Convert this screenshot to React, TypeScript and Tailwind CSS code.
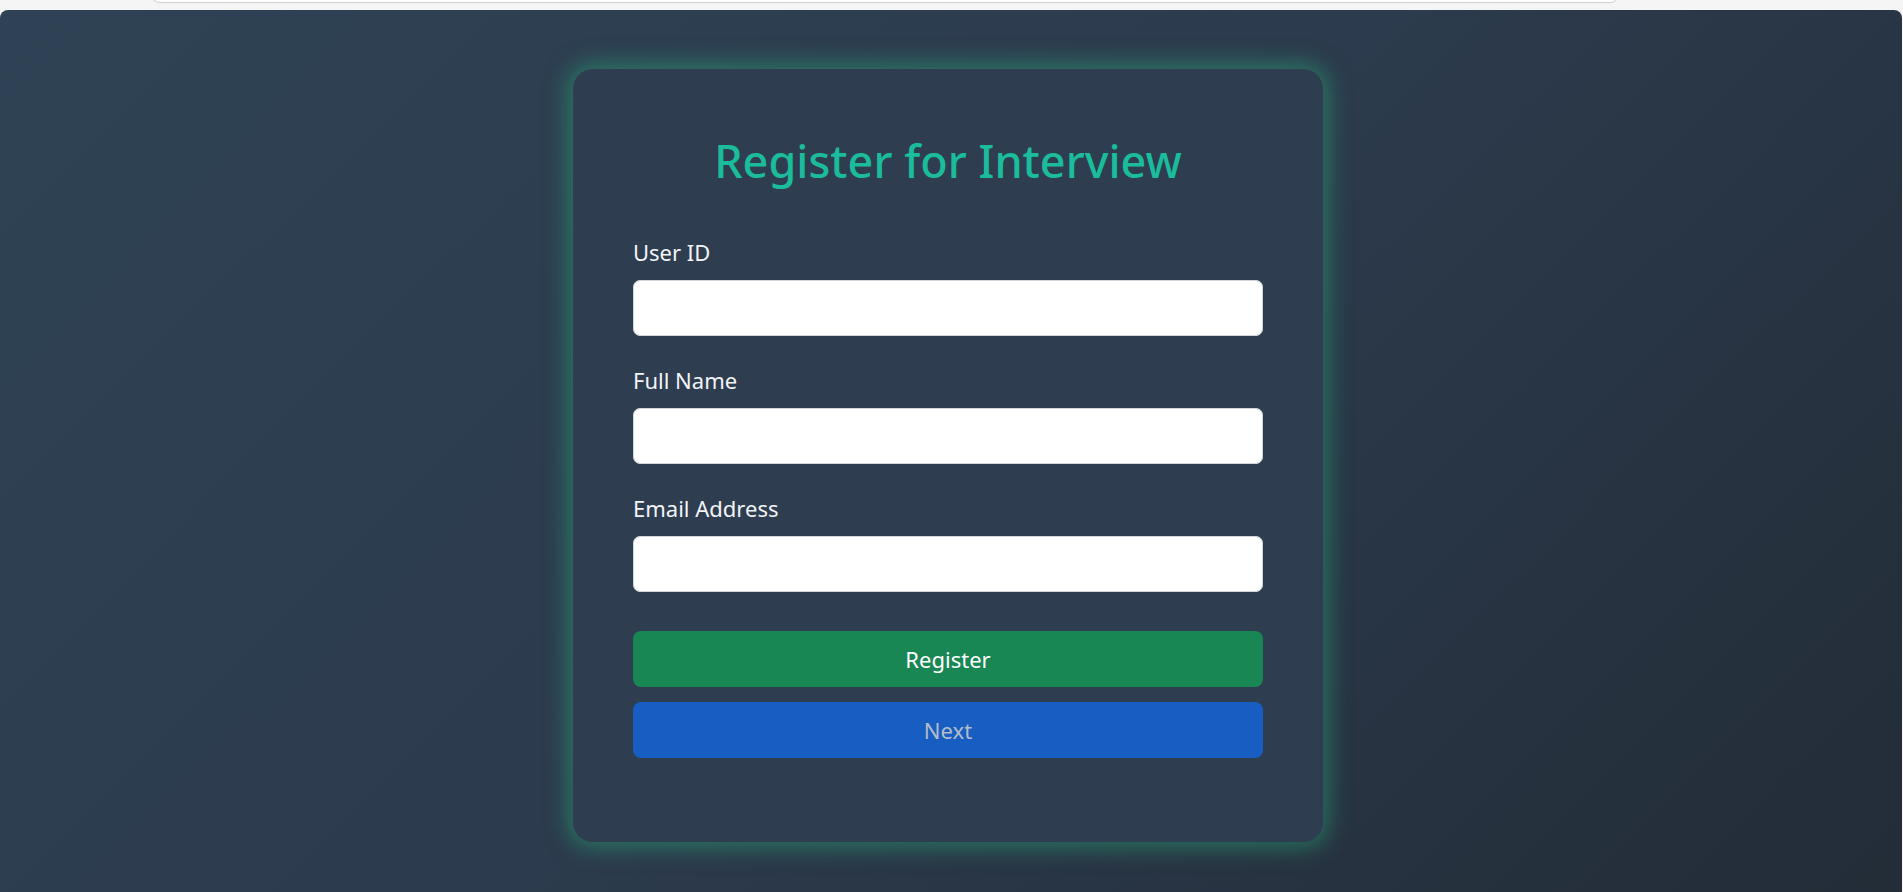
import React from "react";

export default function App() {
  const font = { fontFamily: '"Noto Sans", "Open Sans", sans-serif' };
  return (
    <div className="min-h-[892px] bg-[#f5f5f5] flex flex-col" style={font}>
      <div className="h-[10px] relative shrink-0">
        <div className="absolute left-[150px] w-[1470px] top-[-10px] h-[13px] bg-white border border-[#cfcfcf] rounded-b-[10px]" />
      </div>
      <div className="flex-1 mr-[1px] rounded-t-[8px] bg-[linear-gradient(135deg,#2f4255_0%,#2c3b4d_50%,#232c37_100%)] flex justify-center pt-[59px] pr-[6px]">
        <div className="w-[750px] h-[773px] bg-[#2e3d50] rounded-[20px] shadow-[0_0_22px_6px_rgba(40,170,120,0.5)] px-[60px] pt-[64px] flex flex-col">
          <h1 className="text-[45px] leading-[56px] font-medium text-[#1abc9c] text-center mb-[49px]">
            Register for Interview
          </h1>
          <div className="flex flex-col gap-[30px]">
            {["User ID", "Full Name", "Email Address"].map((l) => (
              <div key={l} className="flex flex-col">
                <label className="text-[22px] leading-[28px] text-[#f2f4f7] mb-[14px]">{l}</label>
                <input className="h-[56px] bg-white border border-[#ced4da] rounded-[7px] outline-none px-4" />
              </div>
            ))}
          </div>
          <button className="mt-[39px] h-[56px] rounded-[8px] bg-[#198754] text-white text-[22px]">Register</button>
          <button className="mt-[15px] h-[56px] rounded-[8px] bg-[#185dc1] text-[#b3bcc9] text-[22px]">Next</button>
        </div>
      </div>
    </div>
  );
}
